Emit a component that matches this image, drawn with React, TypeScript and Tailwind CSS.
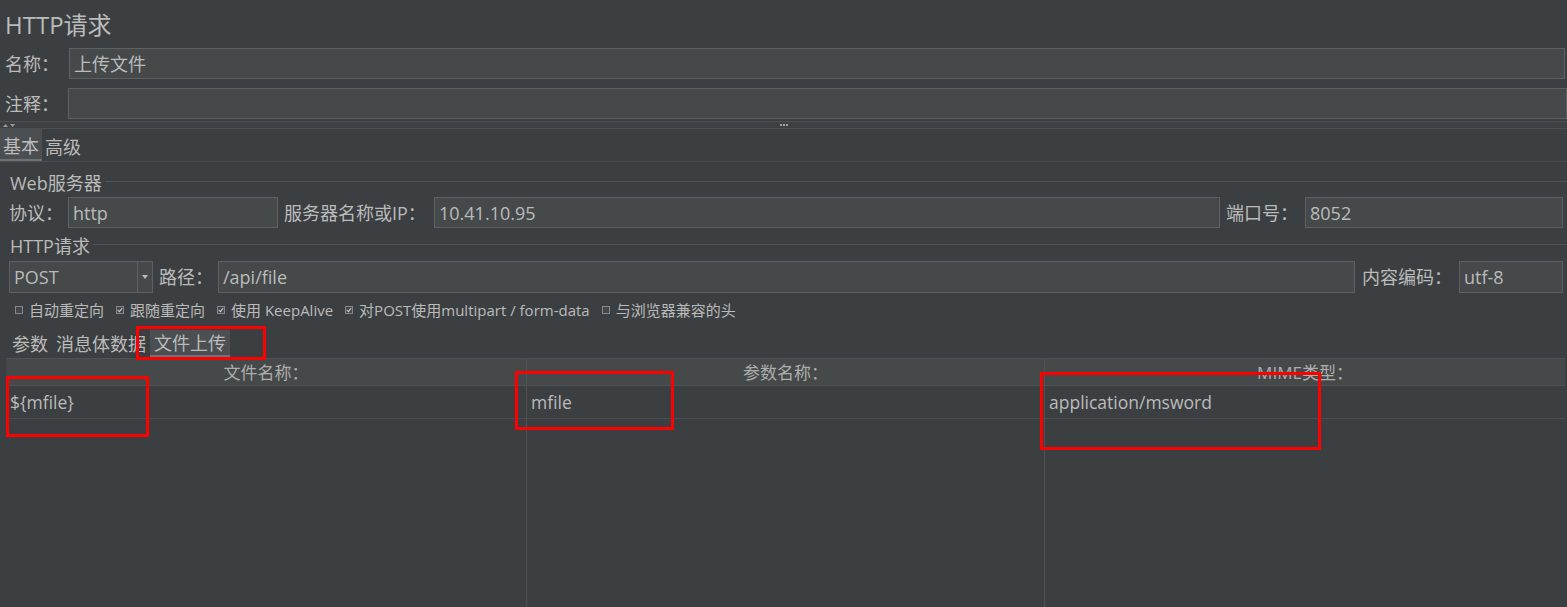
import React from 'react'

function Field({ value = '', className = '' }: { value?: string; className?: string }) {
  return (
    <div
      className={`h-[31px] flex items-center border border-[#5d6062] bg-[#45494a] px-[4px] text-[18px] leading-none text-[#bbbbbb] whitespace-nowrap overflow-hidden ${className}`}
    >
      {value}
    </div>
  )
}

function Label({ children, className = '' }: { children: React.ReactNode; className?: string }) {
  return <span className={`shrink-0 text-[18px] leading-none text-[#bbbbbb] whitespace-nowrap ${className}`}>{children}</span>
}

function GroupTitle({ children }: { children: React.ReactNode }) {
  return (
    <div className="flex items-center h-[22px] pl-[10px] gap-[3px]">
      <span className="text-[18px] leading-[22px] text-[#bbbbbb] whitespace-nowrap">{children}</span>
      <div className="flex-1 h-px bg-[#515456] mb-[4px]" />
    </div>
  )
}

function Check({ checked, label }: { checked?: boolean; label: string }) {
  return (
    <span className="flex items-center gap-[6px] whitespace-pre">
      <span className="w-[8px] h-[8px] border border-[#85888a] bg-[#43474a] flex items-center justify-center">
        {checked && (
          <svg width="6" height="6" viewBox="0 0 6 6">
            <path d="M0.8 3 L2.4 4.6 L5.2 1.2" stroke="#c8c8c8" strokeWidth="1.1" fill="none" />
          </svg>
        )}
      </span>
      <span>{label}</span>
    </span>
  )
}

function Tab({ label, active }: { label: string; active?: boolean }) {
  return (
    <div
      className={[
        'h-full flex items-center px-[3px] pt-[3px] text-[18px] leading-none',
        active ? 'bg-[#4b4f52] border-b-2 border-[#6f7376]' : '',
      ].join(' ')}
    >
      {label}
    </div>
  )
}

const columns = [
  { title: '文件名称：', value: '${mfile}', width: 'w-[521px]' },
  { title: '参数名称：', value: 'mfile', width: 'w-[518px]' },
  { title: 'MIME类型：', value: 'application/msword', width: 'flex-1' },
]

export default function App() {
  return (
    <div className="relative w-full h-[607px] overflow-hidden bg-[#3c3f41] text-[#bbbbbb] font-['Open_Sans','Noto_Sans_CJK_SC',sans-serif] flex flex-col">
      {/* title */}
      <div className="h-[48px] flex items-center pl-[5px] pt-[1px] text-[24px] leading-none">HTTP请求</div>

      {/* name / comment */}
      <div className="h-[31px] flex items-center">
        <Label className="w-[69px] pl-[5px]">名称：</Label>
        <Field value="上传文件" className="flex-1 mr-[2px]" />
      </div>
      <div className="h-[31px] mt-[9px] flex items-center">
        <Label className="w-[68px] pl-[5px]">注释：</Label>
        <Field className="flex-1" />
      </div>

      {/* splitter */}
      <div className="h-[10px] flex flex-col">
        <div className="h-[2px]" />
        <div className="h-px bg-[#4d5052]" />
        <div className="flex-1 bg-[#3e4143] grid grid-cols-[1fr_auto_1fr] items-center">
          <div className="flex items-center gap-[2px] pl-[3px]">
            <svg width="5" height="3" viewBox="0 0 5 3"><path d="M0 3 L2.5 0 L5 3 Z" fill="#9a9a9a" /></svg>
            <svg width="5" height="3" viewBox="0 0 5 3"><path d="M0 0 L2.5 3 L5 0 Z" fill="#9a9a9a" /></svg>
          </div>
          <div className="flex gap-[1px]">
            <span className="w-[2px] h-[2px] bg-[#a0a0a0]" />
            <span className="w-[2px] h-[2px] bg-[#a0a0a0]" />
            <span className="w-[2px] h-[2px] bg-[#a0a0a0]" />
          </div>
          <div />
        </div>
        <div className="h-px bg-[#4d5052]" />
      </div>

      {/* top tabs */}
      <div className="h-[33px] flex border-b border-[#4a4d4f]">
        <Tab label="基本" active />
        <Tab label="高级" />
      </div>

      {/* Web server group */}
      <div className="pt-[10px] h-[35px]">
        <GroupTitle>Web服务器</GroupTitle>
      </div>
      <div className="h-[31px] flex items-center pl-[9px] pr-[4px]">
        <Label className="w-[59px]">协议：</Label>
        <Field value="http" className="w-[210px]" />
        <Label className="w-[156px] pl-[6px]">服务器名称或IP：</Label>
        <Field value="10.41.10.95" className="flex-1" />
        <Label className="w-[85px] pl-[6px]">端口号：</Label>
        <Field value="8052" className="w-[258px]" />
      </div>

      {/* HTTP request group */}
      <div className="pt-[7px] h-[33px]">
        <GroupTitle>HTTP请求</GroupTitle>
      </div>
      <div className="h-[32px] flex items-center pl-[9px] pr-[4px]">
        <div className="w-[144px] h-[32px] flex border border-[#5d6062] bg-[#45494a]">
          <div className="flex-1 flex items-center px-[4px] text-[18px] leading-none">POST</div>
          <div className="w-[15px] border-l border-[#5d6062] flex items-center justify-center">
            <svg width="6" height="4" viewBox="0 0 6 4"><path d="M0 0 L6 0 L3 4 Z" fill="#bbbbbb" /></svg>
          </div>
        </div>
        <Label className="w-[65px] pl-[6px]">路径：</Label>
        <Field value="/api/file" className="flex-1 h-[32px]" />
        <Label className="w-[104px] pl-[7px]">内容编码：</Label>
        <Field value="utf-8" className="w-[104px] h-[32px]" />
      </div>

      {/* checkboxes */}
      <div className="h-[34px] flex items-center gap-[12px] pl-[15px] text-[15px] leading-none">
        <Check label="自动重定向" />
        <Check checked label="跟随重定向" />
        <Check checked label="使用 KeepAlive" />
        <Check checked label="对POST使用multipart / form-data" />
        <Check label="与浏览器兼容的头" />
      </div>

      {/* lower tabs */}
      <div className="h-[31px] flex items-end pl-[8px] pb-px">
        <div className="h-[27px] flex">
          <div className="flex items-center px-[4px] text-[18px] leading-none">参数</div>
          <div className="flex items-center px-[4px] text-[18px] leading-none">消息体数据</div>
          <div className="flex items-center px-[4px] text-[18px] leading-none bg-[#4b4f52] border-b-2 border-[#6f7376]">文件上传</div>
        </div>
      </div>

      {/* table */}
      <div className="flex-1 flex ml-[6px] mr-[2px]">
        {columns.map((c, i) => (
          <div key={i} className={`${c.width} flex flex-col ${i < 2 ? 'border-r border-[#4f5254]' : ''}`}>
            <div className="h-[28px] bg-[#45494a] border-t border-b border-[#4f5254] flex items-center justify-center text-[17px] leading-none text-[#adadad]">
              {c.title}
            </div>
            <div className="h-[33px] border-b border-[#4a4d4f] flex items-center pl-[4px] pt-[2px] text-[17.5px] leading-none text-[#bbbbbb]">
              {c.value}
            </div>
            <div className="flex-1" />
          </div>
        ))}
      </div>

      {/* red annotation boxes */}
      <div className="absolute left-[136px] top-[326px] w-[130px] h-[34px] border-[3px] border-[#ff0000]" />
      <div className="absolute left-[6px] top-[376px] w-[143px] h-[61px] border-[3px] border-[#ff0000]" />
      <div className="absolute left-[515px] top-[371px] w-[159px] h-[59px] border-[3px] border-[#ff0000]" />
      <div className="absolute left-[1040px] top-[372px] w-[281px] h-[78px] border-[3px] border-[#ff0000]" />
    </div>
  )
}
